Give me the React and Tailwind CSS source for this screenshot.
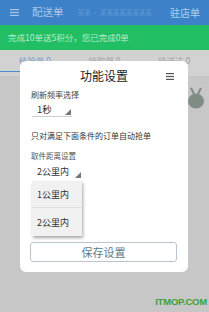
const font = { fontFamily: '"Noto Sans CJK SC", "Noto Sans", sans-serif' };

const Tri = ({ className }) => (
  <svg className={className} width="6" height="6" viewBox="0 0 6 6">
    <polygon points="6,0 6,6 0,6" fill="#777" />
  </svg>
);

export default function App() {
  return (
    <div className="relative w-[209px] h-[312px] overflow-hidden bg-[#c7c7c7] whitespace-nowrap leading-none" style={font}>
      {/* app header, dimmed by overlay */}
      <div className="flex items-center h-[25px] bg-[#3d82c9] pl-[10px] pr-[9px]">
        <svg className="shrink-0" width="9" height="7" viewBox="0 0 9 7">
          <rect y="0" width="9" height="1.2" fill="#a9c6e6" />
          <rect y="2.9" width="9" height="1.2" fill="#a9c6e6" />
          <rect y="5.8" width="9" height="1.2" fill="#a9c6e6" />
        </svg>
        <span className="ml-[13px] text-[10.5px] text-[#a9c6e6]">配送单</span>
        <span className="ml-[14px] text-[6.5px] text-[#5d98d3]">某某 · 某某某某某某某某</span>
        <span className="ml-auto shrink-0 text-[10px] text-[#b4cfea]">驻店单</span>
      </div>
      <div className="flex items-center h-[25px] bg-[#22be63] px-[8px]">
        <span className="text-[8.5px] text-[#b9ecca]">完成10单送5积分，您已完成0单</span>
      </div>
      <div className="relative flex h-[26px] bg-[#d2d2d2] text-[8.5px]">
        <div className="flex-1 flex justify-center pt-[6px] text-[#7a9cc6]">待抢单 0</div>
        <div className="flex-1 flex justify-center pt-[6px] text-[#a3a3a3]">待取餐 0</div>
        <div className="flex-1 flex justify-center pt-[6px] text-[#a3a3a3]">待送达 0</div>
        <div className="absolute left-0 bottom-[4px] w-[70px] h-[1.5px] bg-[#4a8ed2]" />
      </div>

      {/* mascot behind dialog */}
      <svg className="absolute left-[186px] top-[87px]" width="20" height="22" viewBox="0 0 20 22">
        <path d="M5 1 L8 7 M15 1 L12 7" stroke="#7f8c84" strokeWidth="2" />
        <ellipse cx="10" cy="14" rx="8" ry="7.5" fill="#7f8c84" />
      </svg>

      {/* dialog */}
      <div className="absolute left-[20px] top-[61px] w-[168px] h-[211px] bg-white rounded-[6px] px-[11px]">
        <div className="relative flex justify-center items-center h-[30px]">
          <span className="text-[12px] text-[#222]">功能设置</span>
          <svg className="absolute right-[3px] top-[12px]" width="8" height="7" viewBox="0 0 8 7">
            <rect y="0" width="8" height="1.2" fill="#555" />
            <rect y="2.9" width="8" height="1.2" fill="#555" />
            <rect y="5.8" width="8" height="1.2" fill="#555" />
          </svg>
        </div>
        <div className="text-[8px] text-[#444]">刷新频率选择</div>
        <div className="relative mt-[4px] ml-[1px] h-[14px] w-[40px] flex items-center border-b border-[#cfcfcf] pl-[5px]">
          <span className="text-[9.5px] text-[#333]">1秒</span>
          <Tri className="absolute right-[1px] bottom-[1px]" />
        </div>
        <div className="mt-[15px] text-[8px] text-[#333]">只对满足下面条件的订单自动抢单</div>
        <div className="mt-[12px] text-[7.5px] text-[#555]">取件距离设置</div>
        <div className="relative mt-[5px] ml-[1px] h-[14px] w-[49px] flex items-center pl-[5px]">
          <span className="text-[9px] text-[#333]">2公里内</span>
          <Tri className="absolute right-0 bottom-[1px]" />
        </div>

        <div className="absolute left-[12px] top-[120px] w-[50px] bg-[#f1f1f1] shadow-[1px_2px_3px_rgba(0,0,0,0.35)]">
          <div className="h-[27px] flex items-center pl-[5px] text-[9px] text-[#333] border-b border-[#e0e0e0]">1公里内</div>
          <div className="h-[28px] flex items-center pl-[5px] text-[9px] text-[#333]">2公里内</div>
        </div>

        <div className="absolute left-[10px] right-[11px] top-[181px] h-[20px] flex items-center justify-center rounded-[3px] border border-[#b7c6d0] text-[11px] text-[#5e7a8c]">
          保存设置
        </div>
      </div>

      <div className="absolute right-[2px] bottom-[6px] text-[9.5px] font-bold tracking-[-0.2px] text-[#3aa33a]" style={{ fontFamily: '"Liberation Sans", Arial, sans-serif' }}>
        ITMOP.COM
      </div>
    </div>
  );
}
